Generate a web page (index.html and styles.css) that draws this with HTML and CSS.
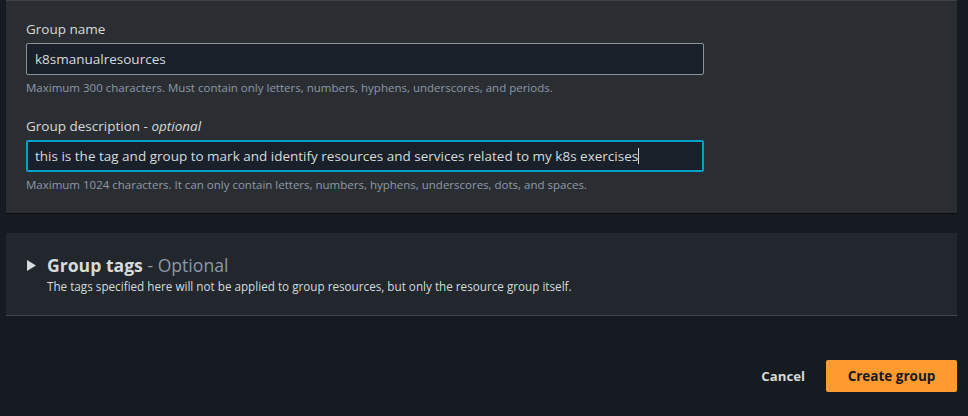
FILE: index.html
```html
<!DOCTYPE html>
<html>
<head>
<meta charset="utf-8">
<link rel="stylesheet" href="styles.css">
</head>
<body>
<div class="page">
  <section class="panel details">
    <div class="field">
      <label class="label">Group name</label>
      <div class="input">k8smanualresources</div>
      <div class="hint">Maximum 300 characters. Must contain only letters, numbers, hyphens, underscores, and periods.</div>
    </div>
    <div class="field">
      <label class="label">Group description - <i>optional</i></label>
      <div class="input focused">this is the tag and group to mark and identify resources and services related to my k8s exercises<span class="caret"></span></div>
      <div class="hint">Maximum 1024 characters. It can only contain letters, numbers, hyphens, underscores, dots, and spaces.</div>
    </div>
  </section>
  <section class="panel tags">
    <div class="tags-head">
      <svg class="tri" width="9" height="11" viewBox="0 0 9 11"><path d="M0 0 L9 5.5 L0 11 Z" fill="#d5dbdb"/></svg>
      <h2 class="tags-title">Group tags <span class="opt">- Optional</span></h2>
    </div>
    <p class="tags-desc">The tags specified here will not be applied to group resources, but only the resource group itself.</p>
  </section>
  <div class="actions">
    <button class="btn-link">Cancel</button>
    <button class="btn-primary">Create group</button>
  </div>
</div>
</body>
</html>
```
FILE: styles.css
```css
html, body {
  margin: 0;
  padding: 0;
  background: #161a21;
  font-family: "Open Sans", "Noto Sans", sans-serif;
  color: #d5dbdb;
}
.page {
  padding: 0 11px 0 6px;
}
.panel {
  box-sizing: border-box;
}
.details {
  background: #2a2e33;
  border-top: 1px solid #3d424a;
  height: 213px;
  padding: 19px 20px 0 20px;
  box-shadow: 0 1px 1px rgba(0,0,0,0.4);
}
.field {
  margin-bottom: 22px;
}
.label {
  display: block;
  font-size: 13.5px;
  line-height: 18px;
  color: #d5dbdb;
  margin-bottom: 5px;
}
.label i {
  font-style: italic;
}
.input {
  box-sizing: border-box;
  width: 678px;
  height: 32px;
  background: #1a2029;
  border: 1px solid #879596;
  border-radius: 2px;
  padding: 0 8px;
  font-size: 13.5px;
  line-height: 30px;
  color: #d5dbdb;
  white-space: nowrap;
}
.input.focused {
  border: 2px solid #00a1c9;
  padding: 0 7px;
  line-height: 28px;
}
.caret {
  display: inline-block;
  width: 1px;
  height: 16px;
  background: #d5dbdb;
  vertical-align: -3px;
}
.hint {
  font-size: 11.5px;
  line-height: 14px;
  color: #8d99a8;
  margin-top: 6px;
  white-space: nowrap;
}
.tags {
  margin-top: 20px;
  background: #22262d;
  border-bottom: 1px solid #414750;
  height: 83px;
  padding: 20px 20px 0 21px;
}
.tags-head {
  display: flex;
  align-items: center;
  gap: 11px;
}
.tri {
  display: block;
}
.tags-title {
  margin: 0;
  font-size: 17.6px;
  line-height: 24px;
  font-weight: 700;
  color: #d5dbdb;
}
.opt {
  font-weight: 400;
  color: #8d99a8;
}
.tags-desc {
  margin: 2px 0 0 20px;
  font-size: 11.7px;
  line-height: 15px;
  color: #d5dbdb;
  white-space: nowrap;
}
.actions {
  display: flex;
  justify-content: flex-end;
  align-items: center;
  gap: 21px;
  margin-top: 44px;
}
.btn-link {
  background: none;
  border: none;
  padding: 0;
  font-family: inherit;
  font-size: 13.2px;
  font-weight: 700;
  color: #d5dbdb;
}
.btn-primary {
  box-sizing: border-box;
  width: 131px;
  height: 32px;
  background: #ff9a2e;
  border: none;
  border-radius: 2px;
  font-family: inherit;
  font-size: 13.5px;
  font-weight: 700;
  color: #16191f;
}
```
